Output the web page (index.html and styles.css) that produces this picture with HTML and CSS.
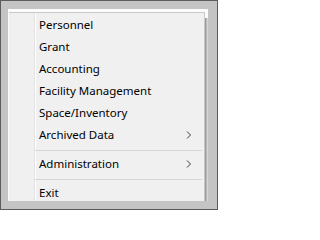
FILE: index.html
```
<!DOCTYPE html>
<html>
<head>
<meta charset="utf-8">
<link rel="stylesheet" href="styles.css">
</head>
<body>
<div class="frame">
  <div class="popup">
    <div class="menu">
      <div class="item"><span class="label">Personnel</span></div>
      <div class="item"><span class="label">Grant</span></div>
      <div class="item"><span class="label">Accounting</span></div>
      <div class="item"><span class="label">Facility Management</span></div>
      <div class="item"><span class="label">Space/Inventory</span></div>
      <div class="item"><span class="label">Archived Data</span>
        <svg class="chev" width="6" height="8" viewBox="0 0 6 8"><polyline points="1,0.5 4.5,4 1,7.5" fill="none" stroke="#3a3a3a" stroke-width="1"/></svg>
      </div>
      <div class="sep"></div>
      <div class="item"><span class="label">Administration</span>
        <svg class="chev" width="6" height="8" viewBox="0 0 6 8"><polyline points="1,0.5 4.5,4 1,7.5" fill="none" stroke="#3a3a3a" stroke-width="1"/></svg>
      </div>
      <div class="sep"></div>
      <div class="item"><span class="label">Exit</span></div>
    </div>
    <div class="shadow"></div>
  </div>
</div>
</body>
</html>
```
FILE: styles.css
```
html, body {
  margin: 0;
  padding: 0;
}
.frame {
  width: 218px;
  height: 210px;
  box-sizing: border-box;
  border: 1px solid #5c5c5c;
  background: #c4c4c4;
  padding: 8px 9px 8px 7px;
}
.popup {
  display: flex;
  width: 200px;
  height: 192px;
  box-sizing: border-box;
  background: #fbfbfb;
  padding: 3px 0 0 1px;
}
.menu {
  width: 196px;
  box-sizing: border-box;
  border-top: 1px solid #c9c9c9;
  border-right: 1px solid #c9c9c9;
  background: linear-gradient(to right, transparent 25px, #e2e2e2 25px, #e2e2e2 26px, #ffffff 26px, #ffffff 27px, transparent 27px), #f0f0f0;
  padding-top: 1px;
  overflow: hidden;
  font-family: "Noto Sans", "Open Sans", sans-serif;
  font-size: 11.5px;
  color: #000;
}
.item {
  display: flex;
  align-items: center;
  justify-content: space-between;
  height: 22px;
  line-height: 22px;
  padding-left: 30px;
  padding-right: 12px;
}
.label {
  white-space: nowrap;
}
.chev {
  display: block;
}
.sep {
  height: 1px;
  margin: 4px 2px 2px 26px;
  background: #d5d5d5;
}
.shadow {
  width: 3px;
  margin-top: 6px;
  background: linear-gradient(to right, #8c8c8c, #b8b8b8, #e6e6e6);
}
```
